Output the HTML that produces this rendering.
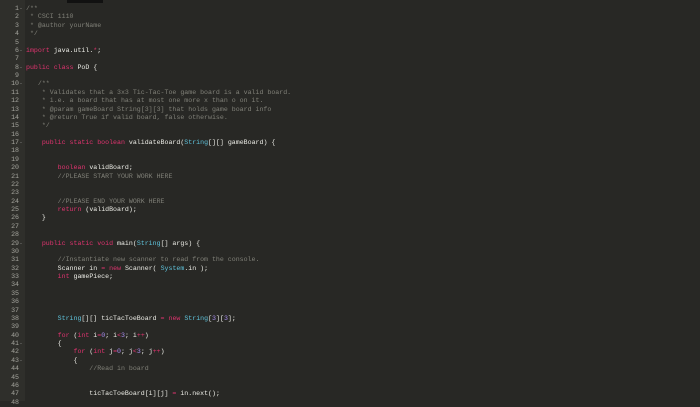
<!DOCTYPE html><html><head><style>
html,body{margin:0;width:700px;height:401px;background:#282825;overflow:hidden;font-family:"Liberation Mono",monospace;}
#g{position:absolute;left:0;top:0;width:25px;height:401px;background:#2f2f2b;}
#tab{position:absolute;left:67px;top:0;width:36px;height:3px;background:#111;}
#code{position:absolute;left:0;top:5px;font-size:6.6px;line-height:8.39px;color:#ececE6;}
.l{height:8.39px;position:relative;white-space:pre}
.n{display:inline-block;width:19px;text-align:right;color:#a5a59e;}
.f{display:inline-block;width:7px;color:#777;}
.k{color:#e0336f}.c{color:#808078}.t{color:#5fc3dc}.p{color:#a98ef0}
</style></head><body><div id="g"></div><div id="tab"></div><div id="code">
<div class="l"><span class="n">1</span><span class="f">-</span><span class="c">/**</span></div>
<div class="l"><span class="n">2</span><span class="f"></span><span class="c"> * CSCI 1110</span></div>
<div class="l"><span class="n">3</span><span class="f"></span><span class="c"> * @author yourName</span></div>
<div class="l"><span class="n">4</span><span class="f"></span><span class="c"> */</span></div>
<div class="l"><span class="n">5</span><span class="f"></span></div>
<div class="l"><span class="n">6</span><span class="f">-</span><span class="k">import</span> java.util.<span class="k">*</span>;</div>
<div class="l"><span class="n">7</span><span class="f"></span></div>
<div class="l"><span class="n">8</span><span class="f">-</span><span class="k">public class</span> PoD {</div>
<div class="l"><span class="n">9</span><span class="f"></span></div>
<div class="l"><span class="n">10</span><span class="f">-</span><span class="c">   /**</span></div>
<div class="l"><span class="n">11</span><span class="f"></span><span class="c">    * Validates that a 3x3 Tic-Tac-Toe game board is a valid board.</span></div>
<div class="l"><span class="n">12</span><span class="f"></span><span class="c">    * i.e. a board that has at most one more x than o on it.</span></div>
<div class="l"><span class="n">13</span><span class="f"></span><span class="c">    * @param gameBoard String[3][3] that holds game board info</span></div>
<div class="l"><span class="n">14</span><span class="f"></span><span class="c">    * @return True if valid board, false otherwise.</span></div>
<div class="l"><span class="n">15</span><span class="f"></span><span class="c">    */</span></div>
<div class="l"><span class="n">16</span><span class="f"></span></div>
<div class="l"><span class="n">17</span><span class="f">-</span>    <span class="k">public static boolean</span> validateBoard(<span class="t">String</span>[][] gameBoard) {</div>
<div class="l"><span class="n">18</span><span class="f"></span></div>
<div class="l"><span class="n">19</span><span class="f"></span></div>
<div class="l"><span class="n">20</span><span class="f"></span>        <span class="k">boolean</span> validBoard;</div>
<div class="l"><span class="n">21</span><span class="f"></span><span class="c">        //PLEASE START YOUR WORK HERE</span></div>
<div class="l"><span class="n">22</span><span class="f"></span></div>
<div class="l"><span class="n">23</span><span class="f"></span></div>
<div class="l"><span class="n">24</span><span class="f"></span><span class="c">        //PLEASE END YOUR WORK HERE</span></div>
<div class="l"><span class="n">25</span><span class="f"></span>        <span class="k">return</span> (validBoard);</div>
<div class="l"><span class="n">26</span><span class="f"></span>    }</div>
<div class="l"><span class="n">27</span><span class="f"></span></div>
<div class="l"><span class="n">28</span><span class="f"></span></div>
<div class="l"><span class="n">29</span><span class="f">-</span>    <span class="k">public static void</span> main(<span class="t">String</span>[] args) {</div>
<div class="l"><span class="n">30</span><span class="f"></span></div>
<div class="l"><span class="n">31</span><span class="f"></span><span class="c">        //Instantiate new scanner to read from the console.</span></div>
<div class="l"><span class="n">32</span><span class="f"></span>        Scanner in <span class="k">=</span> <span class="k">new</span> Scanner( <span class="t">System</span>.in );</div>
<div class="l"><span class="n">33</span><span class="f"></span>        <span class="k">int</span> gamePiece;</div>
<div class="l"><span class="n">34</span><span class="f"></span></div>
<div class="l"><span class="n">35</span><span class="f"></span></div>
<div class="l"><span class="n">36</span><span class="f"></span></div>
<div class="l"><span class="n">37</span><span class="f"></span></div>
<div class="l"><span class="n">38</span><span class="f"></span>        <span class="t">String</span>[][] ticTacToeBoard <span class="k">=</span> <span class="k">new</span> <span class="t">String</span>[<span class="p">3</span>][<span class="p">3</span>];</div>
<div class="l"><span class="n">39</span><span class="f"></span></div>
<div class="l"><span class="n">40</span><span class="f"></span>        <span class="k">for</span> (<span class="k">int</span> i<span class="k">=</span><span class="p">0</span>; i<span class="k">&lt;</span><span class="p">3</span>; i<span class="k">++</span>)</div>
<div class="l"><span class="n">41</span><span class="f">-</span>        {</div>
<div class="l"><span class="n">42</span><span class="f"></span>            <span class="k">for</span> (<span class="k">int</span> j<span class="k">=</span><span class="p">0</span>; j<span class="k">&lt;</span><span class="p">3</span>; j<span class="k">++</span>)</div>
<div class="l"><span class="n">43</span><span class="f">-</span>            {</div>
<div class="l"><span class="n">44</span><span class="f"></span><span class="c">                //Read in board</span></div>
<div class="l"><span class="n">45</span><span class="f"></span></div>
<div class="l"><span class="n">46</span><span class="f"></span></div>
<div class="l"><span class="n">47</span><span class="f"></span>                ticTacToeBoard[i][j] <span class="k">=</span> in.next();</div>
<div class="l"><span class="n">48</span><span class="f"></span></div>
</div></body></html>
